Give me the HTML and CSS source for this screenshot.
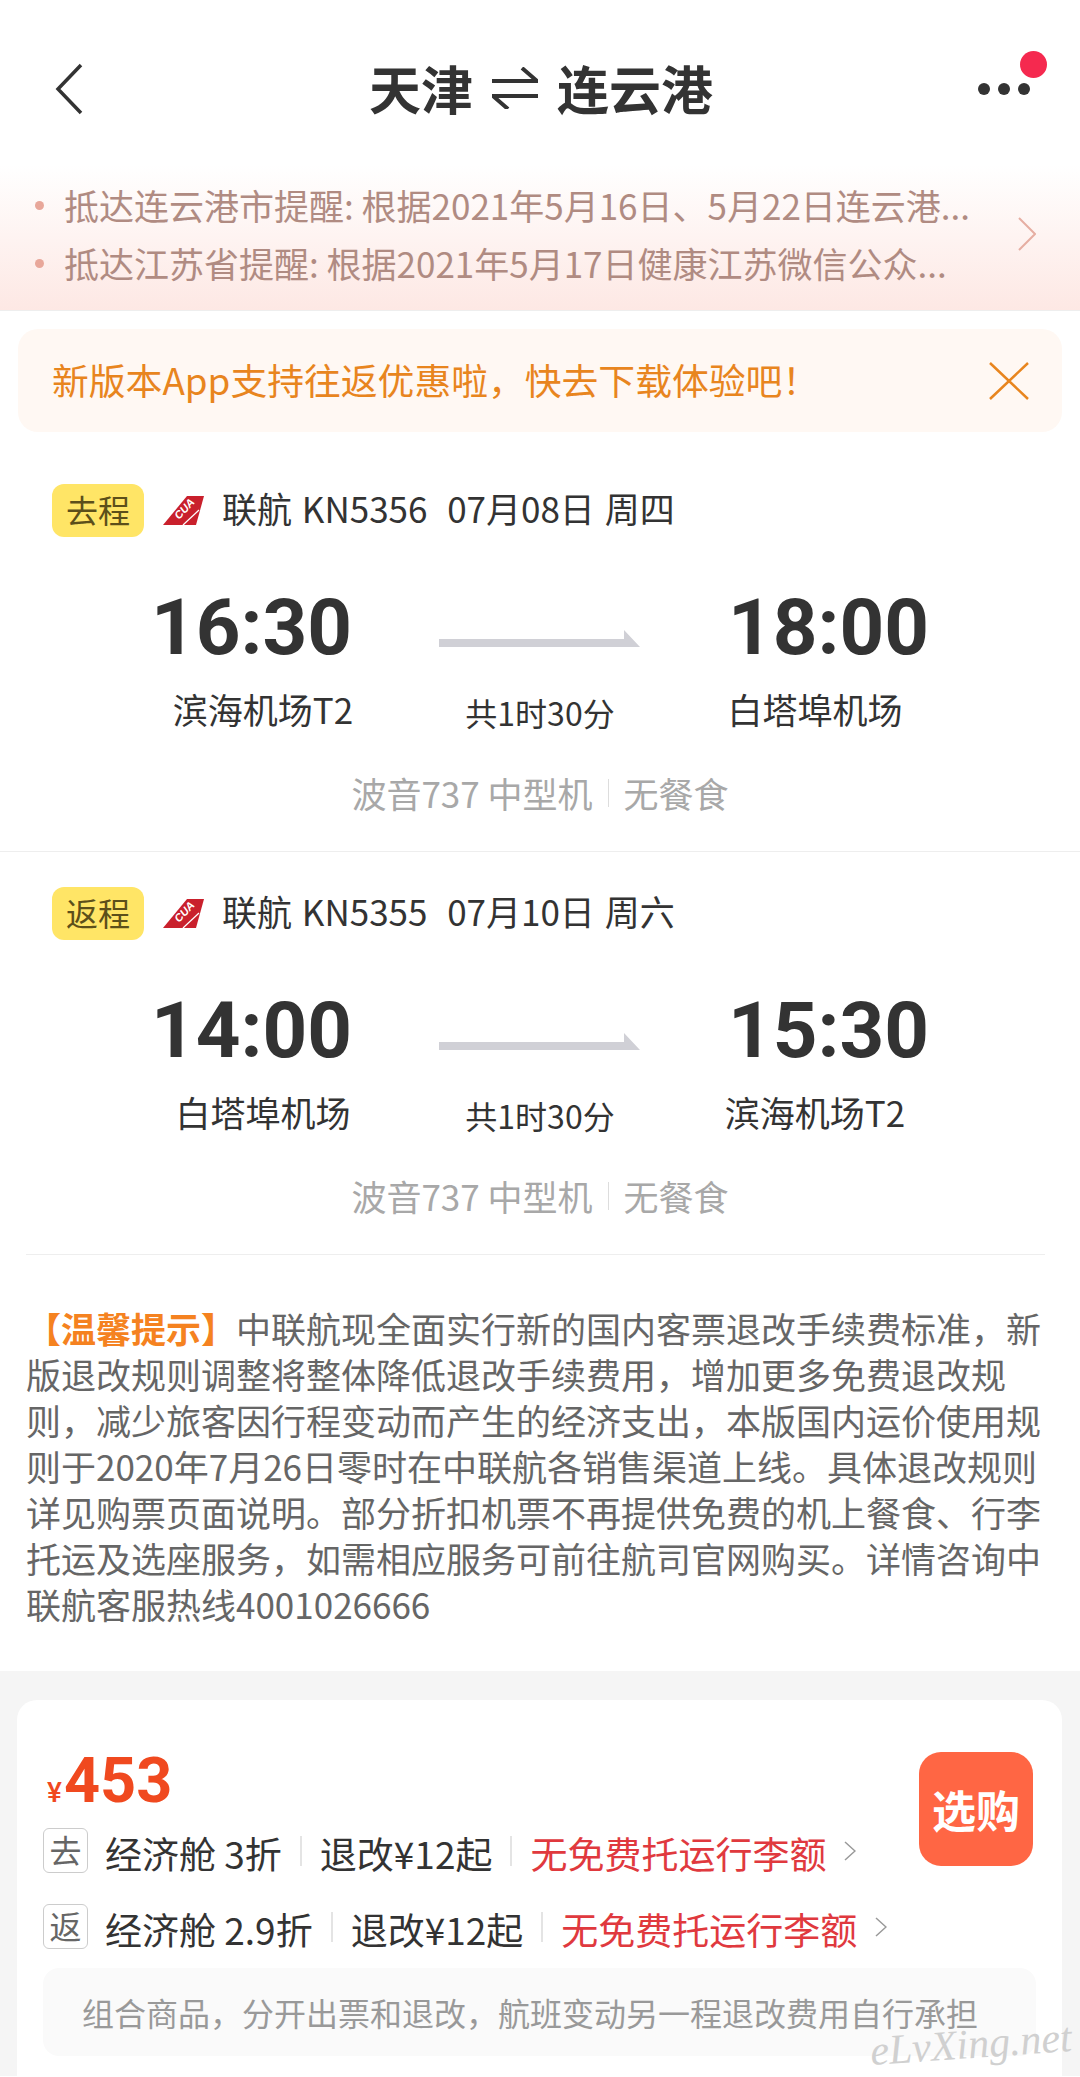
FILE: index.html
```html
<!DOCTYPE html>
<html lang="zh-CN">
<head>
<meta charset="UTF-8">
<meta name="viewport" content="width=device-width, initial-scale=1.0">
<title>天津 - 连云港</title>
<link rel="stylesheet" href="styles.css">
</head>
<body>
    <div class="page">
        <header class="topbar">
            <svg class="back-icon" width="28" height="52" viewBox="0 0 28 52"><path d="M26 2 L3 26 L26 50" fill="none" stroke="#333" stroke-width="3.5"/></svg>
            <h1 class="route">
                <span>天津</span>
                <svg width="46" height="42" viewBox="0 0 46 42"><path d="M0 14 H45 L30 1 M46 29 H1 L16 42" fill="none" stroke="#333" stroke-width="4"/></svg>
                <span>连云港</span>
            </h1>
            <div class="more">
                <svg width="52" height="12" viewBox="0 0 52 12"><circle cx="6" cy="6" r="6" fill="#333"/><circle cx="26" cy="6" r="6" fill="#333"/><circle cx="46" cy="6" r="6" fill="#333"/></svg>
                <span class="more-badge"></span>
            </div>
        </header>

        <section class="notices">
            <ul class="notice-list">
                <li>抵达连云港市提醒: 根据2021年5月16日、5月22日连云港...</li>
                <li>抵达江苏省提醒: 根据2021年5月17日健康江苏微信公众...</li>
            </ul>
            <svg width="18" height="34" viewBox="0 0 18 34"><path d="M1 1 L17 17 L1 33" fill="none" stroke="#e6aea2" stroke-width="2"/></svg>
        </section>

        <section class="promo">
            <span class="promo-text">新版本App支持往返优惠啦，快去下载体验吧！</span>
            <svg width="40" height="38" viewBox="0 0 40 38"><path d="M1 1 L39 37 M39 1 L1 37" fill="none" stroke="#e8851e" stroke-width="2.5"/></svg>
        </section>

        <section class="flight">
            <div class="flight-head">
                <span class="flight-tag">去程</span>
                <svg class="airline-logo" width="41" height="30" viewBox="0 0 41 30"><path d="M24 0 H41 L33 29 H0 Z" fill="#c9202c"/><path d="M20 29 L36 14" stroke="#fff" stroke-width="1.2"/><text x="0" y="0" transform="translate(16 24) rotate(-47)" class="logo-text">CUA</text></svg>
                <span class="flight-title">联航 KN5356&nbsp;&nbsp;07月08日 周四</span>
            </div>
            <div class="flight-times">
                <span class="time">16:30</span>
                <svg class="flight-arrow" width="201" height="17" viewBox="0 0 201 17"><path d="M0 9 H185 V0 L201 17 H0 Z" fill="#d0d0d6"/></svg>
                <span class="time">18:00</span>
            </div>
            <div class="flight-places">
                <span>滨海机场T2</span>
                <span class="duration">共1时30分</span>
                <span>白塔埠机场</span>
            </div>
            <div class="flight-meta">
                <span>波音737 中型机</span>
                <i class="meta-sep"></i>
                <span>无餐食</span>
            </div>
        </section>

        <section class="flight flight-last">
            <div class="flight-head">
                <span class="flight-tag">返程</span>
                <svg class="airline-logo" width="41" height="30" viewBox="0 0 41 30"><path d="M24 0 H41 L33 29 H0 Z" fill="#c9202c"/><path d="M20 29 L36 14" stroke="#fff" stroke-width="1.2"/><text x="0" y="0" transform="translate(16 24) rotate(-47)" class="logo-text">CUA</text></svg>
                <span class="flight-title">联航 KN5355&nbsp;&nbsp;07月10日 周六</span>
            </div>
            <div class="flight-times">
                <span class="time">14:00</span>
                <svg class="flight-arrow" width="201" height="17" viewBox="0 0 201 17"><path d="M0 9 H185 V0 L201 17 H0 Z" fill="#d0d0d6"/></svg>
                <span class="time">15:30</span>
            </div>
            <div class="flight-places">
                <span>白塔埠机场</span>
                <span class="duration">共1时30分</span>
                <span>滨海机场T2</span>
            </div>
            <div class="flight-meta">
                <span>波音737 中型机</span>
                <i class="meta-sep"></i>
                <span>无餐食</span>
            </div>
        </section>

        <p class="tips"><b>【温馨提示】</b>中联航现全面实行新的国内客票退改手续费标准，新版退改规则调整将整体降低退改手续费用，增加更多免费退改规则，减少旅客因行程变动而产生的经济支出，本版国内运价使用规则于2020年7月26日零时在中联航各销售渠道上线。具体退改规则详见购票页面说明。部分折扣机票不再提供免费的机上餐食、行李托运及选座服务，如需相应服务可前往航司官网购买。详情咨询中联航客服热线4001026666</p>

        <section class="offers">
            <div class="offer-card">
                <div class="offer-main">
                    <div class="offer-info">
                        <div class="price"><small>¥</small>453</div>
                        <div class="cabin-row">
                            <span class="cabin-tag">去</span>
                            <span>经济舱 3折</span>
                            <i class="cabin-sep"></i>
                            <span>退改¥12起</span>
                            <i class="cabin-sep"></i>
                            <span class="baggage">无免费托运行李额</span>
                            <svg class="cabin-more" width="12" height="20" viewBox="0 0 12 20"><path d="M1 1 L11 10 L1 19" fill="none" stroke="#999" stroke-width="1.5"/></svg>
                        </div>
                        <div class="cabin-row cabin-row-back">
                            <span class="cabin-tag">返</span>
                            <span>经济舱 2.9折</span>
                            <i class="cabin-sep"></i>
                            <span>退改¥12起</span>
                            <i class="cabin-sep"></i>
                            <span class="baggage">无免费托运行李额</span>
                            <svg class="cabin-more" width="12" height="20" viewBox="0 0 12 20"><path d="M1 1 L11 10 L1 19" fill="none" stroke="#999" stroke-width="1.5"/></svg>
                        </div>
                    </div>
                    <button class="buy-btn">选购</button>
                </div>
                <div class="offer-hint">组合商品，分开出票和退改，航班变动另一程退改费用自行承担</div>
            </div>
        </section>

        <span class="watermark">eLvXing.net</span>
    </div>
</body>
</html>
```

FILE: styles.css
```css
* {
    box-sizing: border-box;
}

body {
    margin: 0;
    background-color: #fff;
    color: #333;
    font-family: "Noto Sans CJK SC", sans-serif;
}

.page {
    position: relative;
    width: 1080px;
    height: 2077px;
    overflow: hidden;
}

/* top bar */
.topbar {
    display: grid;
    grid-template-columns: 1fr auto 1fr;
    align-items: center;
    height: 165px;
    padding: 13px 50px 0 55px;
}

.route {
    display: flex;
    align-items: center;
    gap: 19px;
    margin: 0 3px 3px 0;
    font-size: 52px;
    line-height: 60px;
    font-weight: 700;
}

.more {
    position: relative;
    justify-self: end;
    display: flex;
}

.more-badge {
    position: absolute;
    top: -32px;
    right: -17px;
    width: 27px;
    height: 27px;
    border-radius: 50%;
    background-color: #f5294f;
}

/* notices */
.notices {
    display: flex;
    align-items: center;
    justify-content: space-between;
    height: 146px;
    padding: 0 44px 7px 35px;
    background: linear-gradient(#fff, #fde8e4);
    border-bottom: 1px solid #eee;
}

.notice-list {
    margin: 0;
    padding: 0;
    list-style: none;
    color: #b08b82;
    font-size: 35px;
    line-height: 58px;
}

.notice-list li {
    display: flex;
    align-items: center;
    white-space: nowrap;
}

.notice-list li::before {
    content: "";
    width: 9px;
    height: 9px;
    margin-right: 20px;
    border-radius: 50%;
    background-color: #e8a79a;
}

.promo {
    display: flex;
    align-items: center;
    justify-content: space-between;
    height: 103px;
    margin: 18px 18px 17px;
    padding: 0 33px 0 34px;
    border-radius: 20px;
    background-color: #fff8f3;
    color: #e8851e;
    font-size: 36.8px;
}

.promo-text {
    margin-bottom: 4px;
}

/* flight blocks */
.flight {
    padding: 35px 0;
    border-bottom: 1px solid #eee;
}

.flight-last {
    margin: 0 35px 0 26px;
}

.flight-last > * {
    margin-left: -26px;
    margin-right: -35px;
}

.flight-head {
    display: flex;
    align-items: center;
    height: 53px;
    padding-left: 52px;
    font-size: 35px;
}

.flight-title {
    margin-bottom: 7px;
    word-spacing: 2px;
}

.flight-tag {
    flex-shrink: 0;
    width: 92px;
    height: 53px;
    margin-right: 19px;
    border-radius: 12px;
    background-color: #ffe566;
    color: #5c4f1a;
    font-size: 32px;
    line-height: 50px;
    text-align: center;
}

.airline-logo {
    margin-right: 18px;
}

.logo-text {
    fill: #fff;
    font-family: "Liberation Sans", sans-serif;
    font-size: 11px;
    font-weight: 700;
    font-style: italic;
}

.flight-times {
    display: flex;
    height: 80px;
    margin-top: 51px;
    padding-left: 151px;
}

.time {
    width: 200px;
    font-family: Roboto, sans-serif;
    font-size: 78px;
    line-height: 80px;
    font-weight: 700;
    text-align: center;
}

.flight-arrow {
    margin: 42px 88px 0 88px;
}

.flight-places {
    display: grid;
    grid-template-columns: 200px 77px 200px 75px 200px;
    margin-top: 18px;
    padding-left: 163px;
    font-size: 35px;
    line-height: 46px;
    text-align: center;
}

.flight-places span:nth-child(2) {
    grid-column: 3;
}

.flight-places span:nth-child(3) {
    grid-column: 5;
}

.duration {
    margin-top: 6px;
    font-size: 32px;
    line-height: 40px;
}

.flight-meta {
    display: flex;
    align-items: center;
    justify-content: center;
    margin-top: 38px;
    color: #a8a8a8;
    font-size: 35px;
    line-height: 46px;
}

.meta-sep {
    width: 1px;
    height: 28px;
    margin: 0 15px;
    background-color: #ddd;
}

/* tips */
.tips {
    margin: 0;
    padding: 50px 26px 44px;
    color: #666;
    font-size: 35px;
    line-height: 46px;
}

.tips b {
    color: #f58220;
}

/* offers */
.offers {
    height: 405px;
    padding: 29px 18px 0 17px;
    background-color: #f5f5f5;
}

.offer-card {
    height: 376px;
    padding: 52px 26px 20px;
    border-radius: 20px 20px 0 0;
    background-color: #fff;
}

.offer-main {
    display: flex;
    justify-content: space-between;
    align-items: flex-start;
}

.price {
    height: 52px;
    margin-left: 4px;
    color: #f0491f;
    font-family: Roboto, sans-serif;
    font-size: 63px;
    line-height: 58px;
    font-weight: 700;
}

.price small {
    margin-right: 2px;
    font-size: 28px;
    font-weight: 500;
}

.cabin-row {
    display: flex;
    align-items: center;
    height: 45px;
    margin-top: 24px;
    font-size: 37px;
    white-space: nowrap;
}

.cabin-row-back {
    margin-top: 31px;
}

.cabin-tag ~ span {
    padding-top: 5px;
}

.cabin-tag {
    width: 45px;
    height: 45px;
    margin-right: 17px;
    border: 1px solid #ccc;
    border-radius: 6px;
    color: #666;
    font-size: 32px;
    line-height: 41px;
    text-align: center;
}

.cabin-sep {
    width: 2px;
    height: 30px;
    margin: 0 18px;
    background-color: #e4e4e4;
}

.baggage {
    color: #e0393e;
}

.cabin-more {
    margin-left: 18px;
}

.buy-btn {
    width: 114px;
    height: 114px;
    margin-right: 3px;
    padding: 0;
    border: none;
    border-radius: 22px;
    background-color: #ff6644;
    color: white;
    font-family: inherit;
    font-size: 44px;
    font-weight: 700;
}

.offer-hint {
    height: 88px;
    margin-top: 19px;
    padding-left: 39px;
    border-radius: 16px;
    background-color: #fafafa;
    color: #999;
    font-size: 32px;
    line-height: 88px;
}

.watermark {
    position: absolute;
    right: 8px;
    bottom: 12px;
    color: #d0d0d0;
    font-family: "Liberation Serif", serif;
    font-size: 42px;
    font-style: italic;
    line-height: 1;
    transform: rotate(-4deg);
}
```
